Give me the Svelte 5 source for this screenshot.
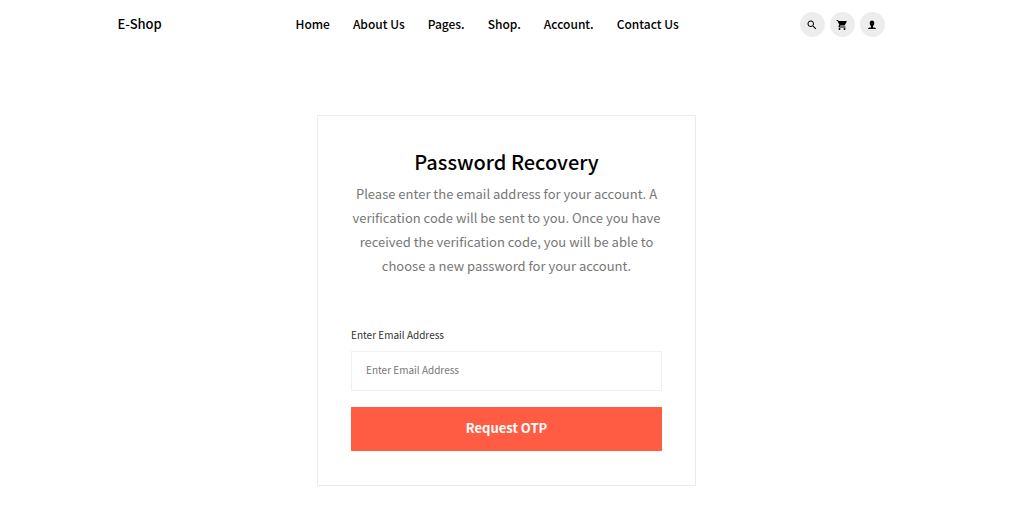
<script>
  const links = ['Home', 'About Us', 'Pages.', 'Shop.', 'Account.', 'Contact Us'];
  let email = $state('');
</script>

<header>
  <a class="brand" href="#home">E-Shop</a>
  <nav>
    {#each links as link}
      <a href="#{link}">{link}</a>
    {/each}
  </nav>
  <div class="tools">
    <button aria-label="Search">
      <svg viewBox="0 0 24 24"><path d="M15.500 14h-.8l-.3-.3A6.500 6.500 0 1 0 13.700 14.400l.3.300v.8l5 5 1.500-1.500zm-6 0a4.500 4.500 0 1 1 0-9 4.500 4.500 0 0 1 0 9z" /></svg>
    </button>
    <button aria-label="Cart">
      <svg viewBox="0 0 24 24"><path d="M1 2v2h2l3.600 7.600-1.350 2.450A2 2 0 0 0 7 17h12v-2H7.400l1.150-2h7.450a2 2 0 0 0 1.750-1L21.700 5a1 1 0 0 0-.9-1H5.200l-.94-2z" /><circle cx="7" cy="20" r="2" /><circle cx="17" cy="20" r="2" /></svg>
    </button>
    <button aria-label="Account">
      <svg viewBox="0 0 24 24"><path d="M12 3c3 0 4.500 2 4.500 5 0 2.500-1 4.500-2.500 6V17c3 .3 6 .5 6 3H4c0-2.500 3-2.700 6-3v-3c-1.500-1.500-2.500-3.500-2.500-6 0-3 1.500-5 4.500-5z" /></svg>
    </button>
  </div>
</header>

<main>
  <form onsubmit={(e) => e.preventDefault()}>
    <h1>Password Recovery</h1>
    <p>Please enter the email address for your account. A verification code will be sent to you. Once you have received the verification code, you will be able to choose a new password for your account.</p>
    <label for="email">Enter Email Address</label>
    <input id="email" type="email" placeholder="Enter Email Address" bind:value={email} />
    <button class="submit">Request OTP</button>
  </form>
</main>

<style>
  :global(body) {
    background: #fff;
    font-family: 'Noto Sans CJK SC', 'Noto Sans', sans-serif;
  }
  header {
    display: grid;
    grid-template-columns: 178px 1fr auto;
    align-items: center;
    max-width: 767px;
    height: 49px;
    margin: 0 auto;
    padding-right: 22px;
  }
  header a {
    padding-bottom: 2px;
    color: #000;
    text-decoration: none;
    font-size: 12px;
    font-weight: 500;
    line-height: 20px;
  }
  header .brand {
    font-size: 13px;
  }
  nav {
    display: flex;
    gap: 23px;
  }
  .tools {
    display: flex;
    gap: 5px;
  }
  .tools button {
    display: grid;
    place-items: center;
    width: 25px;
    height: 25px;
    padding: 0;
    border: 0;
    border-radius: 50%;
    background: #ededed;
  }
  svg {
    width: 12px;
    height: 12px;
  }
  main {
    padding: 66px 11px 20px 0;
  }
  form {
    box-sizing: border-box;
    max-width: 379px;
    margin: 0 auto;
    padding: 31px 33px 34px;
    border: 1px solid #ebebeb;
  }
  h1 {
    margin: 0;
    font-size: 20px;
    font-weight: 500;
    line-height: 30px;
    text-align: center;
    color: #000;
  }
  p {
    margin: 5px 0 47px;
    font-size: 13px;
    line-height: 24px;
    text-align: center;
    color: #777;
  }
  label {
    display: block;
    margin-bottom: 6px;
    font-size: 10px;
    line-height: 20px;
    color: #333;
  }
  input {
    display: block;
    box-sizing: border-box;
    width: 100%;
    height: 40px;
    padding: 0 14px 3px;
    border: 1px solid #f0f0f0;
    font-family: inherit;
    font-size: 10px;
  }
  input::placeholder {
    color: #777;
  }
  .submit {
    width: 100%;
    height: 44px;
    margin-top: 16px;
    padding: 0 0 4px;
    border: 0;
    background: #ff5c43;
    color: #fff;
    font-family: inherit;
    font-size: 13px;
    font-weight: 700;
  }
</style>
